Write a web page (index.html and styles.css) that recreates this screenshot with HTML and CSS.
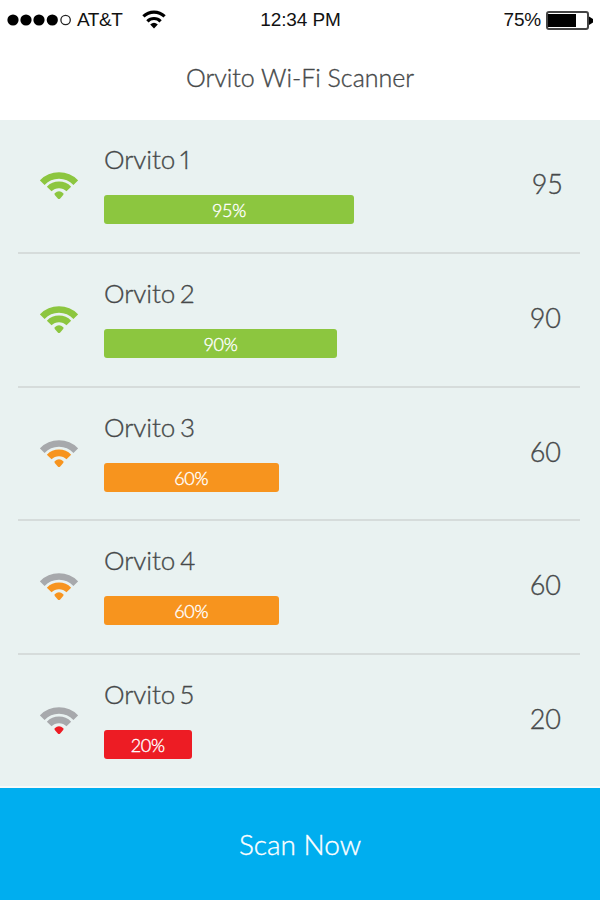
FILE: index.html
```html
<!DOCTYPE html>
<html lang="en">

<head>
    <meta charset="UTF-8">
    <meta name="viewport" content="width=device-width, initial-scale=1.0">
    <title>Orvito Wi-Fi Scanner</title>
    <link rel="stylesheet" href="styles.css">
</head>

<body>
    <!-- shared wifi icon, each arc takes its colour from the row class -->
    <svg class="sprite" width="0" height="0">
        <symbol id="wifi" viewBox="0 0 38 28">
            <path class="outer" d="M2.2 10.6A23.5 23.5 0 0 1 35.8 10.6" />
            <path class="middle" d="M9.2 17A13.8 13.8 0 0 1 28.8 17" />
            <path class="dot" d="M14.7 21.3Q19 17 23.3 21.3Q23.9 22.1 23.2 23L20.2 26.4Q19 27.6 17.8 26.4L14.8 23Q14.1 22.1 14.7 21.3Z" />
        </symbol>
    </svg>

    <header>
        <div class="status">
            <div class="carrier">
                <svg class="signal" width="66" height="12" viewBox="0 0 66 12">
                    <circle cx="6" cy="6" r="5.6" />
                    <circle cx="19" cy="6" r="5.6" />
                    <circle cx="32" cy="6" r="5.6" />
                    <circle cx="45.3" cy="6" r="5.6" />
                    <circle class="empty" cx="58.6" cy="6" r="4.7" />
                </svg>
                <span class="network">AT&amp;T</span>
                <svg class="status-wifi" width="24" height="19" viewBox="0 0 24 19">
                    <path d="M1.4 6.4A15.3 15.3 0 0 1 22.6 6.4" />
                    <path d="M5.4 11.3A9.2 9.2 0 0 1 18.6 11.3" />
                    <path class="dot" d="M8.2 14.4Q12 11.2 15.8 14.4L12 18.4Z" />
                </svg>
            </div>
            <span class="time">12:34 PM</span>
            <div class="power">
                <span>75%</span>
                <svg width="48" height="19" viewBox="0 0 48 19">
                    <rect class="case" x="1" y="1" width="41" height="17" rx="2" />
                    <rect x="2" y="3" width="28" height="13" />
                    <path d="M43 5.5L47 8V11.5L43 14Z" />
                </svg>
            </div>
        </div>
        <h1>Orvito Wi-Fi Scanner</h1>
    </header>

    <ul class="networks">
        <li class="strong">
            <svg class="wifi"><use href="#wifi" /></svg>
            <div class="info">
                <h2>Orvito 1</h2>
                <div class="bar" style="width: 250px">95%</div>
            </div>
            <span class="value first">95</span>
        </li>
        <li class="strong">
            <svg class="wifi"><use href="#wifi" /></svg>
            <div class="info">
                <h2>Orvito 2</h2>
                <div class="bar" style="width: 233px">90%</div>
            </div>
            <span class="value">90</span>
        </li>
        <li class="medium">
            <svg class="wifi"><use href="#wifi" /></svg>
            <div class="info">
                <h2>Orvito 3</h2>
                <div class="bar" style="width: 174.5px">60%</div>
            </div>
            <span class="value">60</span>
        </li>
        <li class="medium">
            <svg class="wifi"><use href="#wifi" /></svg>
            <div class="info">
                <h2>Orvito 4</h2>
                <div class="bar" style="width: 174.5px">60%</div>
            </div>
            <span class="value">60</span>
        </li>
        <li class="weak">
            <svg class="wifi"><use href="#wifi" /></svg>
            <div class="info">
                <h2>Orvito 5</h2>
                <div class="bar" style="width: 87.5px">20%</div>
            </div>
            <span class="value">20</span>
        </li>
    </ul>

    <button type="button" class="scan">Scan Now</button>
</body>

</html>
```
FILE: styles.css
```css
* {
    box-sizing: border-box;
}

body {
    display: flex;
    flex-direction: column;
    height: 900px;
    margin: 0;
    background-color: #fff;
    color: #46494a;
    font-family: Lato, sans-serif;
    font-weight: 300;
    -webkit-text-stroke: 0.35px currentColor;
}

.sprite {
    display: none;
}

header {
    height: 120px;
}

.status {
    display: grid;
    grid-template-columns: 1fr auto 1fr;
    align-items: center;
    height: 40px;
    padding: 0 6px 0 7px;
    color: #111;
    font-family: "Liberation Sans", sans-serif;
    font-size: 19px;
    font-weight: 400;
    -webkit-text-stroke: 0;
}

.time {
    letter-spacing: -0.1px;
}

.carrier,
.power {
    display: flex;
    align-items: center;
}

.network {
    margin-left: 4px;
    letter-spacing: -0.4px;
}

.status-wifi {
    margin: -2px 0 0 19px;
}

.status-wifi path {
    fill: none;
    stroke: #000;
    stroke-width: 3.2;
}

.status-wifi .dot {
    fill: #000;
    stroke: none;
}

.signal .empty {
    fill: none;
    stroke: #222;
    stroke-width: 1.3;
}

.power {
    justify-content: flex-end;
    gap: 5px;
    letter-spacing: -0.2px;
}

.power .case {
    fill: #fff;
    stroke: #444;
    stroke-width: 2;
}

h1,
h2 {
    margin: 0;
    font-weight: 300;
}

h1 {
    font-size: 25px;
    line-height: 75px;
    text-align: center;
}

.networks {
    height: 668px;
    margin: 0;
    padding: 0 20px 0 18px;
    border-bottom: 2px solid #f6fafa;
    background-color: #e9f2f1;
    list-style: none;
}

.networks li {
    display: flex;
    height: 133.75px;
    padding-left: 22px;
    border-bottom: 2px solid #d6dcdb;
}

.networks li:last-child {
    border-bottom: none;
}

.wifi {
    width: 38px;
    height: 28px;
    margin-top: 52px;
}

.outer,
.middle {
    fill: none;
    stroke-width: 6.6;
}

/* signal levels */
.strong {
    --level: #8cc63f;
    --outer: #8cc63f;
    --middle: #8cc63f;
}

.medium {
    --level: #f7941e;
    --outer: #a7a9ac;
    --middle: #f7941e;
}

.weak {
    --level: #ed1c24;
    --outer: #a7a9ac;
    --middle: #a7a9ac;
}

.outer {
    stroke: var(--outer);
}

.middle {
    stroke: var(--middle);
}

#wifi .dot {
    fill: var(--level);
}

.info {
    flex: 1;
    padding: 23px 0 0 26px;
}

h2 {
    height: 52px;
    font-size: 26px;
    font-variant-numeric: proportional-nums;
    letter-spacing: -0.1px;
    line-height: 32px;
    word-spacing: -2px;
}

.bar {
    height: 29px;
    border-radius: 3px;
    background-color: var(--level);
    color: #fff;
    font-size: 18px;
    letter-spacing: -0.3px;
    line-height: 31px;
    text-align: center;
}

.value {
    margin: 47px 19px 0 0;
    font-size: 27px;
    line-height: 34px;
}

.first {
    margin-right: 17px;
}

.scan {
    flex: 1;
    padding: 0;
    border: none;
    background-color: #00aeef;
    color: #fff;
    font-family: inherit;
    font-size: 28px;
    font-weight: 300;
}
```
